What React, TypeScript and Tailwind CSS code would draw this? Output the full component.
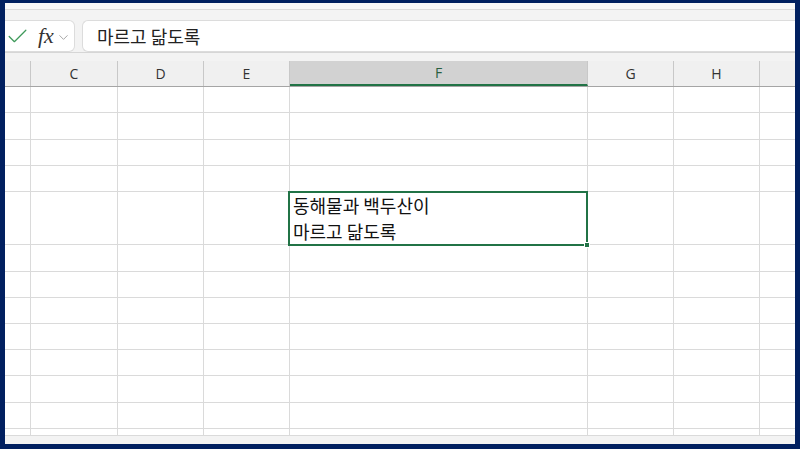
import React from 'react';
import { Check, ChevronDown } from 'lucide-react';

const COLS = [
    { key: 'B', label: '', w: 'w-[26px]' },
    { key: 'C', label: 'C', w: 'w-[87px]' },
    { key: 'D', label: 'D', w: 'w-[86px]' },
    { key: 'E', label: 'E', w: 'w-[86px]' },
    { key: 'F', label: 'F', w: 'w-[298px]' },
    { key: 'G', label: 'G', w: 'w-[86px]' },
    { key: 'H', label: 'H', w: 'w-[86px]' },
    { key: 'I', label: '', w: 'flex-1' },
];

// row heights in px, row 5 is the wrapped one
const ROWS = ['h-[26px]', 'h-[27px]', 'h-[26px]', 'h-[26px]', 'h-[53px]', 'h-[27px]', 'h-[26px]', 'h-[26px]', 'h-[26px]', 'h-[26px]', 'h-[27px]', 'h-[26px]', 'h-[7px]'];

const SELECTED_ROW = 4;

export default function App() {
    return (
        <div className="w-[800px] h-[449px] bg-[#012060] pt-[3px] px-[5px] pb-[5px] overflow-hidden">
            <div className="w-full h-full flex flex-col bg-white overflow-hidden" style={{ fontFamily: '"Open Sans", "Noto Sans CJK KR", sans-serif' }}>

                {/* top strip of ribbon */}
                <div className="h-[7px] shrink-0 bg-[#f8f8f8] border-b border-[#dcdcdc]"></div>

                {/* formula bar */}
                <div className="h-[42px] shrink-0 bg-[#f3f3f3] flex items-start pt-[10px] gap-[7px]">
                    <div className="w-[70px] h-[32px] bg-white border border-l-0 border-[#dcdcdc] rounded-r-md flex items-center">
                        <Check size={25} strokeWidth={1.2} className="text-[#3f9a5b] ml-[0px] mt-[1px]" />
                        <span className="ml-[8px] text-[22px] italic text-[#333] leading-none" style={{ fontFamily: '"Liberation Serif", serif' }}>fx</span>
                        <ChevronDown size={15} strokeWidth={1.4} className="text-[#9a9a9a] ml-[2px] mt-[3px]" />
                    </div>
                    <div className="flex-1 h-[32px] bg-white border border-r-0 border-[#dcdcdc] rounded-l-md flex items-center pl-[14px]">
                        <span className="text-[18px] text-[#222] leading-none" style={{ fontFamily: '"Noto Sans CJK KR", sans-serif' }}>마르고 닮도록</span>
                    </div>
                </div>

                {/* column headers */}
                <div className="h-[35px] shrink-0 bg-[#f3f3f3] border-t border-[#d6d6d6] pt-[8px]">
                    <div className="flex h-[26px] bg-[#f0f0f0] border-b-[1.5px] border-[#a5a5a5]">
                        {COLS.map((c) => (
                            <div
                                key={c.key}
                                className={`${c.w} h-full flex items-center justify-center text-[14px] border-r border-[#c8c8c8] ${c.key === 'F' ? 'bg-[#d2d2d2] text-[#2a5f40] border-b-2 border-b-[#217346] -mb-[1.5px]' : 'text-[#333]'} ${c.key === 'I' ? 'border-r-0' : ''}`}
                            >
                                {c.label}
                            </div>
                        ))}
                    </div>
                </div>

                {/* grid */}
                <div className="flex-1 flex flex-col">
                    {ROWS.map((h, r) => (
                        <div key={r} className={`flex shrink-0 ${h}`}>
                            {COLS.map((c) => (
                                <div key={c.key} className={`${c.w} h-full relative border-r border-b border-[#dadada] ${c.key === 'I' ? 'border-r-0' : ''}`}>
                                    {r === SELECTED_ROW && c.key === 'F' && (
                                        <div className="absolute top-[-1px] left-[-2px] right-[-1px] bottom-[-2px] border-2 border-[#217346] z-10">
                                            <div className="pl-[3px] text-[18px] leading-[26px] text-[#111]" style={{ fontFamily: '"Noto Sans CJK KR", sans-serif' }}>
                                                <div className="-mt-[1px]">동해물과 백두산이</div>
                                                <div>마르고 닮도록</div>
                                            </div>
                                            <div className="absolute right-[-4px] bottom-[-4px] w-[6px] h-[6px] bg-[#217346] border border-white"></div>
                                        </div>
                                    )}
                                </div>
                            ))}
                        </div>
                    ))}
                </div>

                {/* bottom scroll strip */}
                <div className="h-[8px] shrink-0 bg-[#f3f3f3]"></div>
            </div>
        </div>
    );
}
